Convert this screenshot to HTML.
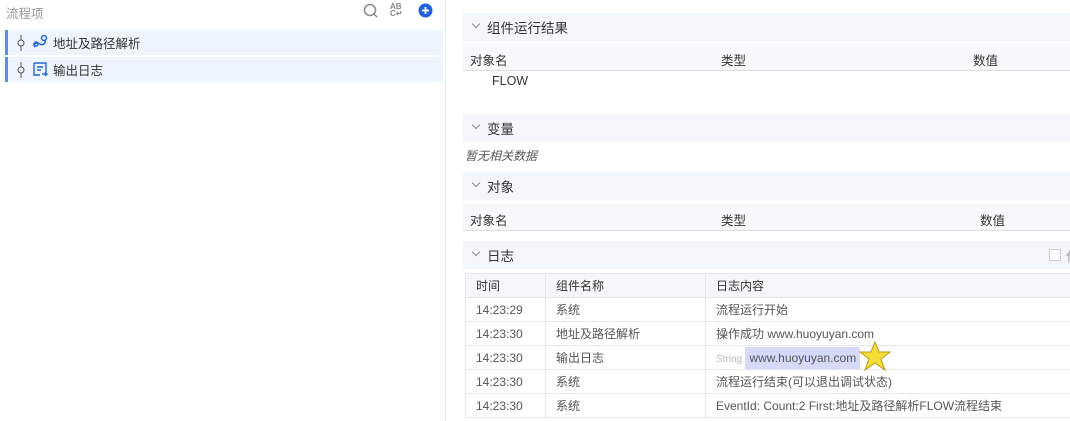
<!DOCTYPE html>
<html><head><meta charset="utf-8"><style>
*{margin:0;padding:0;box-sizing:border-box}
body{width:1070px;height:421px;overflow:hidden;background:#fff;font-family:"Liberation Sans","Noto Sans CJK SC",sans-serif;font-size:12px;color:#333;position:relative}
.a{position:absolute;white-space:nowrap}
.left{position:absolute;left:0;top:0;width:446px;height:421px;border-right:1px solid #e8e8e8}
.item{position:absolute;left:5px;width:438px;height:25px;background:#eef4fd;border-left:3px solid #5b8fd9}
.item span{position:absolute;left:45px;top:3px;font-size:12.5px;color:#333}
.sec{position:absolute;left:463px;width:607px;height:28px;background:#f3f6fa}
.sec span{position:absolute;left:24px;top:4px;font-size:13.5px;color:#333}
.chev{position:absolute;left:10px;top:8px;width:6px;height:6px;border-right:1px solid #888;border-bottom:1px solid #888;transform:rotate(45deg)}
.th{position:absolute;left:463px;width:607px;height:27px;background:#f7f8f9;border-bottom:1px solid #ddd}
.th span{position:absolute;top:6px;font-size:12.5px}
table{position:absolute;left:465px;top:273px;width:610px;border-collapse:collapse}
td{height:24px;border:1px solid #e4e6ea;padding:0 10px;font-size:12px;color:#555}
tr:first-child td{background:#f5f6f8;color:#333}
</style></head><body>
<div class="left">
<div class="a" style="left:6px;top:3px;font-size:12.5px;color:#999">流程项</div>
<svg class="a" style="left:363px;top:3px" width="16" height="16"><circle cx="7" cy="7" r="5.5" fill="none" stroke="#888" stroke-width="1.5"/><line x1="11" y1="11" x2="14" y2="14" stroke="#888" stroke-width="1.5"/></svg>
<div class="a" style="left:390px;top:3px;font-size:8px;font-weight:bold;color:#888;line-height:7px">AB<br>C↵</div>
<svg class="a" style="left:418px;top:3px" width="15" height="15"><circle cx="7.5" cy="7.5" r="7" fill="#1f5fe0"/><path d="M7.5 4v7M4 7.5h7" stroke="#fff" stroke-width="1.8"/></svg>
<div class="item" style="top:30px"><svg class="a" style="left:8px;top:5px" width="10" height="16"><circle cx="5" cy="8" r="3" fill="none" stroke="#555"/><path d="M5 0v5M5 11v5" stroke="#555"/></svg><svg class="a" style="left:24px;top:4px" width="16" height="16"><path d="M3 13c-3-3 2-5 5-3s6-1 5-4" fill="none" stroke="#2566d8" stroke-width="1.5"/><circle cx="12" cy="4" r="2.5" fill="none" stroke="#2566d8" stroke-width="1.5"/><circle cx="4" cy="10" r="2" fill="none" stroke="#2566d8" stroke-width="1.5"/></svg><span>地址及路径解析</span></div>
<div class="item" style="top:57px"><svg class="a" style="left:8px;top:5px" width="10" height="16"><circle cx="5" cy="8" r="3" fill="none" stroke="#555"/><path d="M5 0v5M5 11v5" stroke="#555"/></svg><svg class="a" style="left:24px;top:4px" width="16" height="16"><path d="M2 2h12v9M2 2v12h6M5 6h6M5 9h4M10 13h5M13 11l2 2-2 2" fill="none" stroke="#2566d8" stroke-width="1.4"/></svg><span>输出日志</span></div>
</div>

<div class="sec" style="top:13px"><i class="chev"></i><span>组件运行结果</span></div>
<div class="th" style="top:44px"><span style="left:7px">对象名</span><span style="left:258px">类型</span><span style="left:510px">数值</span></div>
<div class="a" style="left:492px;top:74px;font-size:12.5px">FLOW</div>
<div class="sec" style="top:114px"><i class="chev"></i><span>变量</span></div>
<div class="a" style="left:465px;top:147px;font-size:12px;color:#555;font-style:italic">暂无相关数据</div>
<div class="sec" style="top:172px"><i class="chev"></i><span>对象</span></div>
<div class="th" style="top:204px"><span style="left:7px">对象名</span><span style="left:258px">类型</span><span style="left:517px">数值</span></div>
<div class="sec" style="top:241px"><i class="chev"></i><span>日志</span><i class="a" style="left:586px;top:8px;width:12px;height:12px;border:1px solid #ccc;background:#fff"></i><b class="a" style="left:603px;top:5px;font-weight:normal;color:#999;font-size:13px">仅</b></div>
<table>
<tr><td style="width:80px">时间</td><td style="width:160px">组件名称</td><td>日志内容</td></tr>
<tr><td>14:23:29</td><td>系统</td><td>流程运行开始</td></tr>
<tr><td>14:23:30</td><td>地址及路径解析</td><td>操作成功 www.huoyuyan.com</td></tr>
<tr><td>14:23:30</td><td>输出日志</td><td style="position:relative"><span style="font-size:10px;color:#bbb">String</span> <span style="background:#d6dafa;padding:4px 4px;margin-left:0px">www.huoyuyan.com</span><svg style="position:absolute;left:152px;top:-6px" width="34" height="32"><polygon points="17,2 21,12 32,12 23,19 27,30 17,23 7,30 11,19 2,12 13,12" fill="#f6de3a" stroke="#b89a10" stroke-width="1"/></svg></td></tr>
<tr><td>14:23:30</td><td>系统</td><td>流程运行结束(可以退出调试状态)</td></tr>
<tr><td>14:23:30</td><td>系统</td><td>EventId: Count:2 First:地址及路径解析FLOW流程结束</td></tr>
</table>
</body></html>
